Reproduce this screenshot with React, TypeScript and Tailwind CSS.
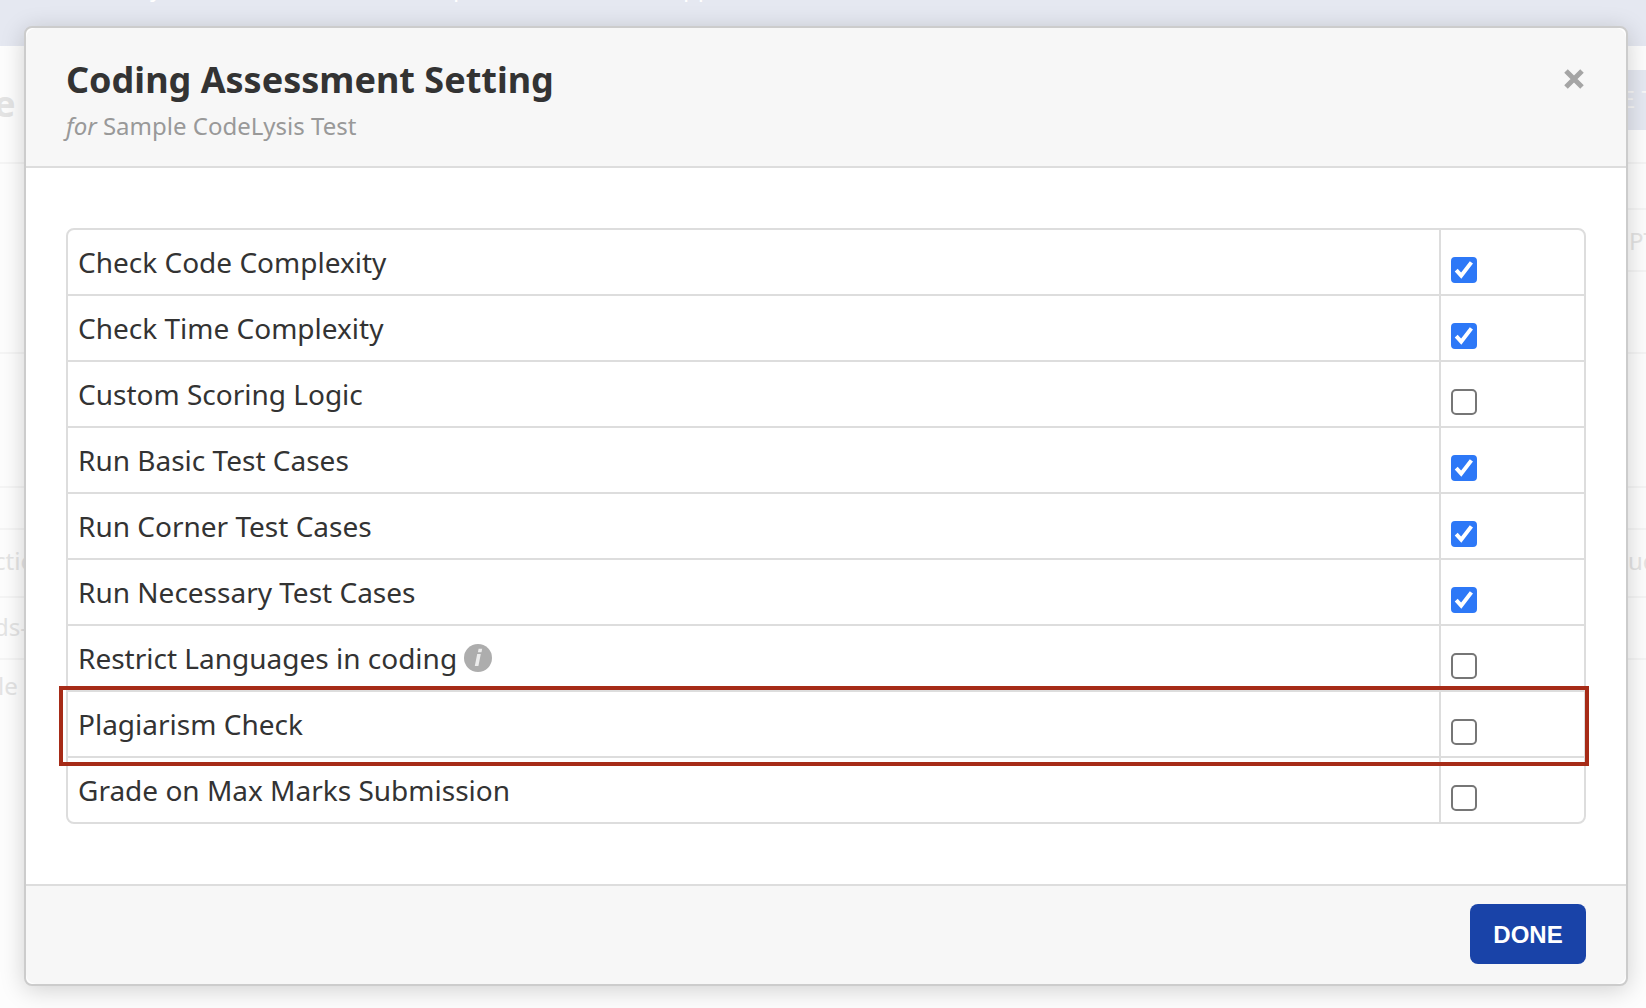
import { useState } from "react";

const SETTINGS = [
  { id: "code-complexity", label: "Check Code Complexity", on: true },
  { id: "time-complexity", label: "Check Time Complexity", on: true },
  { id: "custom-scoring", label: "Custom Scoring Logic", on: false },
  { id: "basic-cases", label: "Run Basic Test Cases", on: true },
  { id: "corner-cases", label: "Run Corner Test Cases", on: true },
  { id: "necessary-cases", label: "Run Necessary Test Cases", on: true },
  { id: "restrict-languages", label: "Restrict Languages in coding", on: false, info: true },
  { id: "plagiarism", label: "Plagiarism Check", on: false, marked: true },
  { id: "max-marks", label: "Grade on Max Marks Submission", on: false },
];

function InfoIcon() {
  return (
    <svg viewBox="0 0 28 28" className="size-7 shrink-0" aria-label="More information" role="img">
      <circle cx="14" cy="14" r="14" fill="#adadad" />
      <path d="M14.6 4.8h3.6l-.7 3.4h-3.6z M13.2 10h3.6l-2.4 12h-3.6z" fill="#ececec" />
    </svg>
  );
}

function SettingRow({ item }: { item: (typeof SETTINGS)[number] }) {
  const [on, setOn] = useState(item.on);
  return (
    <tr className="group relative">
      <td className="border-t-2 border-[#ddd] px-[10px] py-3 group-first:border-t-0">
        <div className="flex items-center gap-[7px]">
          <label htmlFor={item.id} className="text-[28px] leading-10">
            {item.label}
          </label>
          {item.info && <InfoIcon />}
        </div>
        {item.marked && (
          <span className="pointer-events-none absolute -top-1 -right-[5px] -bottom-[10px] -left-[9px] z-10 border-4 border-[#a62b17]" />
        )}
      </td>
      <td className="w-[145px] border-t-2 border-l-2 border-[#ddd] px-[10px] pt-4 group-first:border-t-0">
        <span className="grid size-[26px]">
          <input
            id={item.id}
            type="checkbox"
            checked={on}
            onChange={(e) => setOn(e.target.checked)}
            className="col-start-1 row-start-1 size-[26px] appearance-none rounded-[5px] border-2 border-[#767676] bg-white checked:rounded-[4px] checked:border-[#2d78f7] checked:bg-[#2d78f7]"
          />
          {on && (
            <svg viewBox="0 0 26 26" className="pointer-events-none col-start-1 row-start-1 size-[26px]">
              <path d="M5.2 13.2l5 5.4L20.4 5.4" fill="none" stroke="#fff" strokeWidth="4" />
            </svg>
          )}
        </span>
      </td>
    </tr>
  );
}

function Backdrop() {
  return (
    <div
      aria-hidden="true"
      className="absolute inset-0 flex flex-col overflow-hidden bg-[#fdfdfd] text-2xl leading-8 whitespace-nowrap text-[#e4e4e4]"
    >
      <div className="flex h-[46px] shrink-0 bg-[#e5e8f1] text-white">
        <span className="-mt-[29px] w-[303px] shrink-0 ml-[150px]">y</span>
        <span className="-mt-[29px] w-[230px] shrink-0">p</span>
        <span className="-mt-[29px]">pp</span>
      </div>
      <div className="flex grow justify-between">
        <div className="w-6 *:box-border *:border-b-2 *:border-[#f5f5f5]">
          <div className="h-[118px] pt-[34px]">
            <span className="-ml-1.5 text-4xl leading-[48px] font-bold">e</span>
          </div>
          <div className="h-[190px]" />
          <div className="h-[134px]" />
          <div className="h-[42px]" />
          <div className="h-[68px] pt-[15px]">
            <span className="-ml-1.5">ction</span>
          </div>
          <div className="h-[62px] pt-[13px]">
            <span className="-ml-1.5">ds-on</span>
          </div>
          <div className="h-[62px] border-none! pt-[10px]">
            <span className="-ml-0.5">le</span>
          </div>
        </div>
        <div className="w-[18px] *:box-border *:border-b-2 *:border-[#f5f5f5]">
          <div className="h-[118px] pt-6">
            <div className="h-[60px] bg-[#e5e8f1] font-['Liberation_Sans',sans-serif] leading-[60px] text-[#f8f8f8]">
              <span className="-ml-[9px]">E TEST</span>
            </div>
          </div>
          <div className="h-[46px]" />
          <div className="h-[62px] pt-[15px] pl-px">PT</div>
          <div className="h-[82px]" />
          <div className="h-[134px]" />
          <div className="h-[42px]" />
          <div className="h-[68px] pt-[15px]">ues</div>
          <div className="h-[62px]" />
        </div>
      </div>
    </div>
  );
}

export default function App() {
  return (
    <div className="relative min-h-screen pt-[26px] pr-[18px] pb-[22px] pl-6 font-['Noto_Sans',sans-serif] text-[#333]">
      <Backdrop />
      <section
        role="dialog"
        aria-labelledby="dialog-title"
        className="relative rounded-lg border-2 border-[#ccc] bg-white shadow-[0_4px_24px_rgba(0,0,0,0.18)]"
      >
        <header className="flex items-start justify-between rounded-[10px] rounded-b-none border-b-2 border-[#ddd] bg-[#f7f7f7] px-10 pt-7 pb-[22px]">
          <div>
            <h1 id="dialog-title" className="text-4xl leading-[48px] font-bold">
              Coding Assessment Setting
            </h1>
            <p className="mt-1 text-2xl leading-9 text-[#999]">
              <em>for</em> Sample CodeLysis Test
            </p>
          </div>
          <button type="button" aria-label="Close" className="mt-[9px] -mr-0.5 p-1">
            <svg viewBox="0 0 20 20" className="size-5">
              <path d="M2 2l16 16M18 2L2 18" stroke="#a5a5a5" strokeWidth="5" />
            </svg>
          </button>
        </header>
        <main className="px-10 py-[60px]">
          <div className="rounded-lg border-2 border-[#ddd]">
            <table className="w-full border-separate border-spacing-0">
              <tbody>
                {SETTINGS.map((item) => (
                  <SettingRow key={item.id} item={item} />
                ))}
              </tbody>
            </table>
          </div>
        </main>
        <footer className="flex justify-end rounded-[10px] rounded-t-none border-t-2 border-[#ddd] bg-[#f7f7f7] px-10 pt-[18px] pb-5">
          <button
            type="button"
            className="h-[60px] w-[116px] rounded-lg bg-[#1943a8] pt-0.5 font-['Liberation_Sans',sans-serif] text-2xl font-bold text-white"
          >
            DONE
          </button>
        </footer>
      </section>
    </div>
  );
}
